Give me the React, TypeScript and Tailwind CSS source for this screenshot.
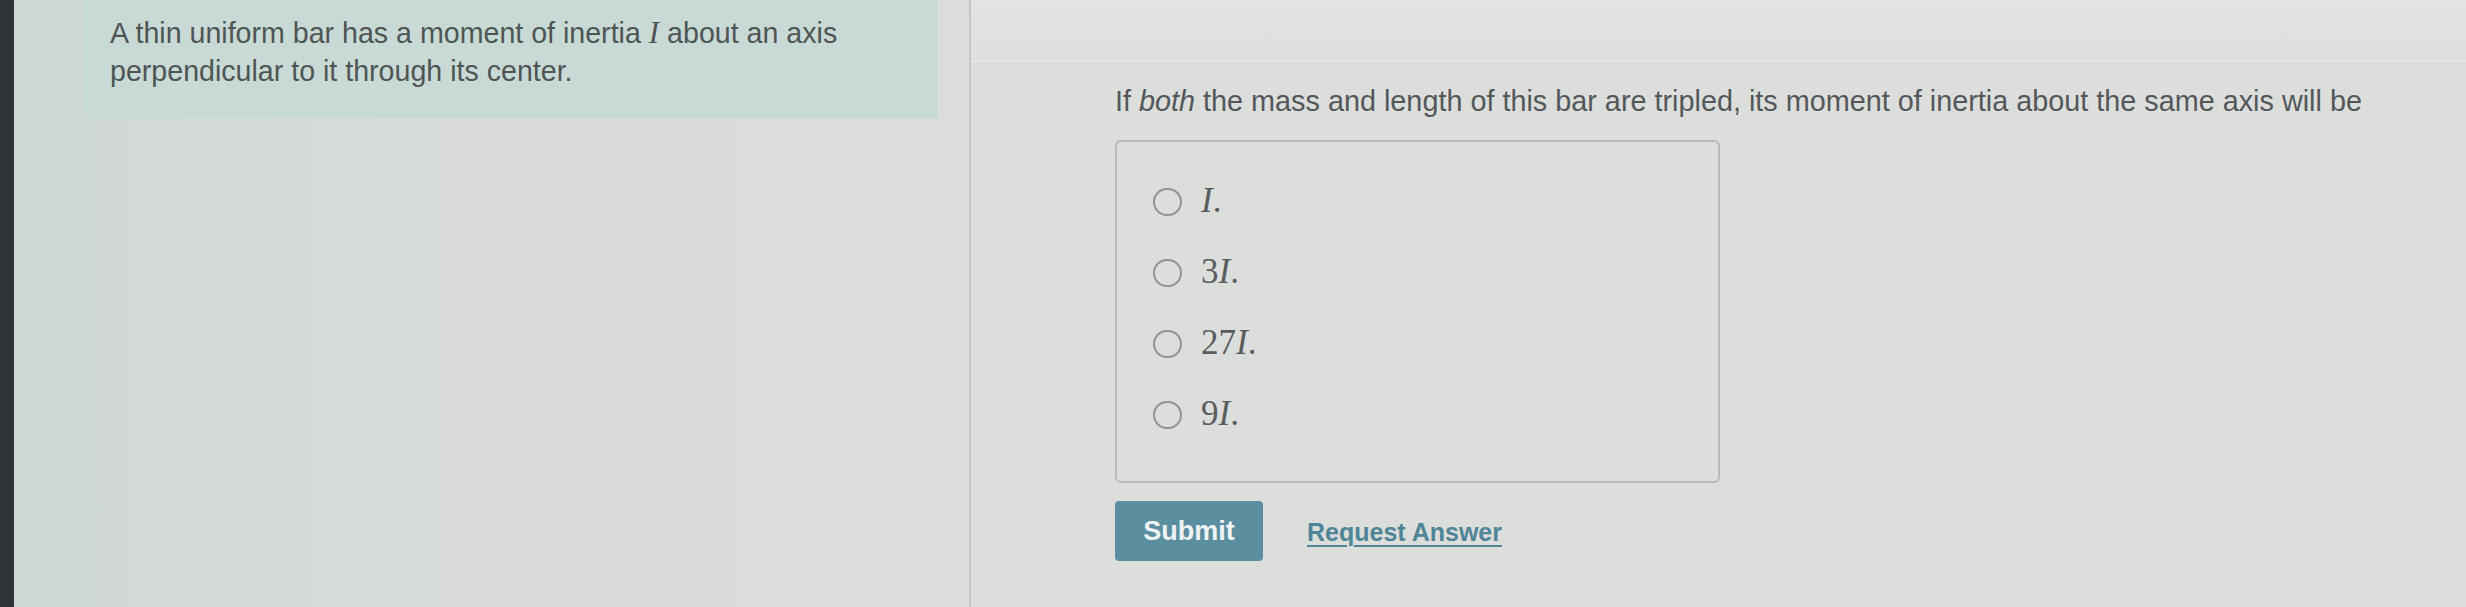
import React from "react";

const options = [
  { num: "", label: "I" },
  { num: "3", label: "I" },
  { num: "27", label: "I" },
  { num: "9", label: "I" },
];

export default function App() {
  return (
    <div
      className="flex w-[2466px] h-[607px] overflow-hidden bg-[#dadcd9]"
      style={{ fontFamily: '"Liberation Sans", Arial, sans-serif' }}
    >
      {/* dark edge */}
      <div className="w-[14px] h-full bg-[#2e3436]" />

      {/* left column */}
      <div className="w-[955px] h-full bg-linear-to-r from-[#cfd8d6] via-[#d9dcda] to-[#dbdddb]">
        <div className="ml-[69px] w-[855px] h-[118px] bg-[#c9dad6] pl-[27px] pt-[14px] text-[28.6px] leading-[38px] text-[#4f5555]">
          <div>
            A thin uniform bar has a moment of inertia{" "}
            <span
              className="italic text-[31px]"
              style={{ fontFamily: '"Liberation Serif", "Times New Roman", serif' }}
            >
              I
            </span>{" "}
            about an axis
          </div>
          <div>perpendicular to it through its center.</div>
        </div>
      </div>

      {/* divider */}
      <div className="w-[2px] h-full bg-[#c2c7c7]" />

      {/* right column */}
      <div className="flex-1 h-full flex flex-col bg-[#dcdedb]">
        <div className="h-[62px] bg-linear-to-b from-[#e3e3e1] to-[#dfe0de] border-b-2 border-[#e6e7e5]" />
        <div className="pl-[144px]">
          <div className="mt-[20px] text-[28.8px] leading-[38px] text-[#52585a] whitespace-nowrap">
            If <i>both</i> the mass and length of this bar are tripled, its moment of inertia about the same axis will be
          </div>

          <div className="mt-[20px] w-[605px] h-[343px] border-2 border-[#b4b9b9] rounded-[6px] pt-[24px] pl-[36px]">
            {options.map((o, i) => (
              <div key={i} className="h-[71px] flex items-center">
                <div className="w-[29px] h-[28px] rounded-full border-2 border-[#8f9494]" />
                <div
                  className="ml-[19px] text-[35px] text-[#585d5e]"
                  style={{ fontFamily: '"Liberation Serif", "Times New Roman", serif' }}
                >
                  {o.num}
                  <span className="italic">{o.label}</span>.
                </div>
              </div>
            ))}
          </div>

          <div className="mt-[18px] flex items-center">
            <button className="w-[148px] h-[60px] rounded-[4px] bg-[#5b8fa0] text-[27px] font-bold text-[#eef3f4]">
              Submit
            </button>
            <a className="ml-[44px] mt-[4px] text-[25px] font-bold text-[#4f8597] underline underline-offset-[4px] decoration-2">
              Request Answer
            </a>
          </div>
        </div>
      </div>
    </div>
  );
}
